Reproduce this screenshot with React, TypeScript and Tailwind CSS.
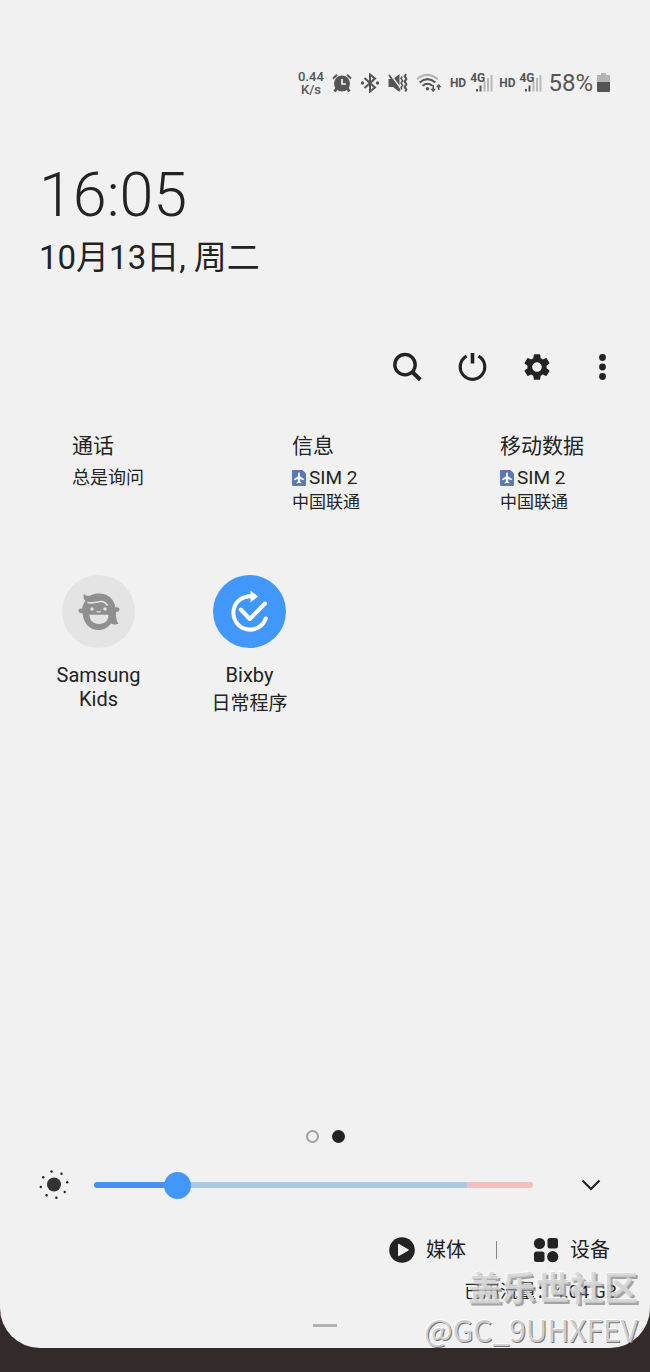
import { useState } from "react";
import { MdSettings } from "react-icons/md";

const sims = [
  { title: "通话", value: "总是询问" },
  { title: "信息", sim: "SIM 2", value: "中国联通" },
  { title: "移动数据", sim: "SIM 2", value: "中国联通" },
];

function AlarmIcon() {
  return (
    <svg viewBox="0 0 20 20" className="size-5" fill="none" stroke="currentColor" aria-hidden="true">
      <circle cx="10" cy="10.500" r="8" fill="currentColor" stroke="none" />
      <path d="M1 5.400 5 1.800M19 5.400 15 1.800" strokeWidth="2" />
      <path d="M4.500 15.500 2.600 18.500M15.500 15.500l1.900 3" strokeWidth="2.800" />
      <path d="M10 6v5h4" stroke="#f1f1f1" strokeWidth="1.700" />
    </svg>
  );
}

function BluetoothIcon() {
  return (
    <svg viewBox="0 0 20 20" className="size-5" fill="none" stroke="currentColor" strokeWidth="2" aria-hidden="true">
      <path d="M4.500 5 15 14.500 10 18.500V1.500L15 5.500 4.500 15" />
      <circle cx="2.500" cy="10" r="1.700" fill="currentColor" stroke="none" />
      <circle cx="17.500" cy="10" r="1.700" fill="currentColor" stroke="none" />
    </svg>
  );
}

function MuteVibrateIcon() {
  return (
    <svg viewBox="0 0 20 20" className="size-5" fill="none" stroke="currentColor" aria-hidden="true">
      <path d="M.5 6h4.500L11.500 1v18L5 14H.5z" fill="currentColor" stroke="none" />
      <path d="M2.200 1 13 16" stroke="#f1f1f1" strokeWidth="1.400" />
      <path d="M1 2 12 17.500" strokeWidth="1.800" />
      <path d="M14.200 3.500l-1.200 2 1.600 2.200L13 10l1.600 2.200-1.600 2.300 1 1.800" strokeWidth="1.500" />
      <path d="M18 1l-1.400 2.300L18.400 6l-1.800 2.600 1.800 2.700-1.800 2.600 1.800 2.700-1.200 2" strokeWidth="2" />
    </svg>
  );
}

function WifiIcon() {
  return (
    <svg viewBox="0 0 26 20" className="h-5 w-[26px]" fill="none" stroke="currentColor" strokeWidth="2" aria-hidden="true">
      <path d="M1 6.200Q11-2.400 22 6.200" stroke="#b5b5b5" />
      <path d="M3.600 9.400Q11.500 2.800 19.400 9.400" />
      <path d="M6.600 12.800Q11.500 8.600 16.400 12.800" />
      <circle cx="11.500" cy="15.800" r="1.800" fill="currentColor" stroke="none" />
      <path d="M17.200 12v5M22.700 17v-4" strokeWidth="1.600" />
      <path d="M14.500 15.800h5.400l-2.700 3.400zM20 14.200h5.400l-2.700-3.400z" fill="currentColor" stroke="none" />
    </svg>
  );
}

function Signal() {
  return (
    <span className="flex items-center gap-[5px]">
      <span className="text-xs leading-none font-bold">HD</span>
      <span className="relative block h-5 w-[22px]">
        <svg viewBox="0 0 22 20" className="h-5 w-[22px]" aria-hidden="true">
          <path d="M5 16h2v2.500H5zM8.500 12.500h2v6h-2z" fill="#555" />
          <path d="M12.500 8h2v10.500h-2zM16 5h2v13.500h-2zM19.500 2h2v16.500h-2z" fill="#b9b9b9" />
        </svg>
        <span className="absolute -top-px -left-px text-xs leading-none font-bold">4G</span>
      </span>
    </span>
  );
}

function StatusBar() {
  return (
    <div className="flex h-[30px] items-center justify-end gap-2 pr-10 text-[#555]">
      <div className="flex flex-col items-center text-[13px] leading-[13px] font-medium">
        <span>0.44</span>
        <span>K/s</span>
      </div>
      <AlarmIcon />
      <BluetoothIcon />
      <MuteVibrateIcon />
      <WifiIcon />
      <div className="flex items-center gap-[6px]">
        <Signal />
        <Signal />
        <span className="flex items-center gap-1">
          <span className="text-2xl leading-none">58%</span>
          <svg viewBox="0 0 13 20" className="h-5 w-[13px]" aria-hidden="true">
            <path d="M4 0h5v2h4v8H0V2h4z" fill="#b5b5b5" />
            <path d="M0 9h13v9a1 1 0 0 1-1 1H1a1 1 0 0 1-1-1z" fill="#555" />
          </svg>
        </span>
      </div>
    </div>
  );
}

function Toolbar() {
  return (
    <div className="flex justify-end gap-[33px] pr-8">
      <button type="button" aria-label="搜索" className="size-8">
        <svg viewBox="0 0 32 32" className="size-8" fill="none" stroke="currentColor" strokeWidth="3.400">
          <circle cx="14" cy="13.700" r="10.200" />
          <path d="m21.300 21 8 7.800" strokeWidth="4" />
        </svg>
      </button>
      <button type="button" aria-label="电源" className="size-8">
        <svg viewBox="0 0 32 32" className="size-8" fill="none" stroke="currentColor" strokeWidth="3.200">
          <path d="M10.600 5.200a12.300 12.300 0 1 0 11.800 0" />
          <path d="M16.500 2v10.500" strokeWidth="3.600" />
        </svg>
      </button>
      <button type="button" aria-label="设置" className="size-8">
        <MdSettings className="size-8" />
      </button>
      <button type="button" aria-label="更多" className="size-8">
        <svg viewBox="0 0 32 32" className="size-8" fill="currentColor">
          <circle cx="16.500" cy="6.500" r="3.400" />
          <circle cx="16.500" cy="16" r="3.400" />
          <circle cx="16.500" cy="25.500" r="3.400" />
        </svg>
      </button>
    </div>
  );
}

function SimIcon() {
  return (
    <svg viewBox="0 0 14 16" className="h-4 w-[14px]" aria-hidden="true">
      <path d="M1 0h9.500L14 3.500V15a1 1 0 0 1-1 1H1a1 1 0 0 1-1-1V1a1 1 0 0 1 1-1z" fill="#5b78b4" />
      <path d="M7 2.600c.6 0 .9.6.9 1.300v2.400l4 2.600v1.300l-4-1.200v2.300l1.400 1.100v1L7 12.800l-2.300.6v-1l1.400-1.100V9l-4 1.200V8.900l4-2.600V3.900c0-.7.3-1.300.9-1.300z" fill="#fff" />
    </svg>
  );
}

function KidsIcon() {
  return (
    <svg viewBox="0 0 42 38" className="h-[38px] w-[42px]" aria-hidden="true">
      <path
        d="M6 1c1.500 1.800 3.500 2 6 1.700C15 1 18 .6 21.500.6 30 .6 36 6 37.500 14.500c2-.6 4 .3 4 2s-1.700 2.600-3.500 2.300c-.2 5 .2 9 2.500 12-3 1-5.500.8-7.500-.3C29.800 34.500 26 37 20.800 37 12 37 5.500 31 4.600 20.500 2.500 20.600.5 19.500.5 17.700s1.700-2.600 3.700-2c.4-3 1.500-5.500 3.200-7.700C5.500 6 5 3.500 6 1z"
        fill="#8f8f8f"
      />
      <path d="M10 9.500c5 1.500 10-1.800 15-.8 2.200.4 3.200 1.600 4.200 3.300" fill="none" stroke="#e4e4e4" strokeWidth="1.600" strokeLinecap="round" />
      <circle cx="14" cy="16" r="1.700" fill="#e4e4e4" />
      <circle cx="27" cy="16" r="1.700" fill="#e4e4e4" />
      <path d="M19 18.500q1.700 1 3.400 0" fill="none" stroke="#e4e4e4" strokeWidth="1.200" strokeLinecap="round" />
      <path d="M11.500 21.800h19C30.500 27.500 27 31 21 31s-9.500-3.500-9.500-9.200z" fill="#e4e4e4" />
    </svg>
  );
}

function RoutineIcon() {
  return (
    <svg viewBox="0 0 42 46" className="h-[46px] w-[42px]" fill="none" stroke="#fff" strokeWidth="4" strokeLinecap="round" aria-hidden="true">
      <path d="M23 7.300A16.700 16.700 0 1 0 36.800 29.500" />
      <path d="M21.500 1.500 29 7.500 21.500 13.500z" fill="#fff" stroke="none" />
      <path d="M11.800 20.500 20.800 30 36 14.500" strokeLinejoin="round" />
    </svg>
  );
}

function BrightnessIcon() {
  return (
    <svg viewBox="0 0 30 30" className="size-[30px] shrink-0" fill="#222" aria-hidden="true">
      <circle cx="15" cy="14.500" r="7" fill="#333" />
      <circle cx="12.500" cy="1.500" r="1.200" />
      <circle cx="22.500" cy="3.800" r="1.200" />
      <circle cx="28.200" cy="12.200" r="1.200" />
      <circle cx="25.700" cy="22" r="1.200" />
      <circle cx="17.400" cy="27.700" r="1.200" />
      <circle cx="7.600" cy="25.300" r="1.200" />
      <circle cx="1.800" cy="17" r="1.200" />
      <circle cx="4.200" cy="7.200" r="1.200" />
    </svg>
  );
}

function BrightnessBar() {
  const [level, setLevel] = useState(17);

  return (
    <div className="flex items-center pr-[46px] pl-[39px]">
      <BrightnessIcon />
      <input
        type="range"
        aria-label="亮度"
        min={0}
        max={100}
        value={level}
        onChange={(e) => setLevel(Number(e.target.value))}
        className="mr-[45px] ml-[25px] h-[6px] min-w-0 flex-1 appearance-none rounded-full [&::-webkit-slider-thumb]:size-[27px] [&::-webkit-slider-thumb]:appearance-none [&::-webkit-slider-thumb]:rounded-full [&::-webkit-slider-thumb]:bg-[#4297fd]"
        style={{
          background: `linear-gradient(to right, #4b8fee ${level}%, #a8cce8 ${level}%, #a8cce8 85%, #f3bfc1 85%)`,
        }}
      />
      <button type="button" aria-label="展开" className="flex size-[26px] items-center justify-center">
        <svg viewBox="0 0 20 12" className="h-3 w-5" fill="none" stroke="currentColor" strokeWidth="2.200">
          <path d="m1.500 1.500 8.500 8.500 8.500-8.500" />
        </svg>
      </button>
    </div>
  );
}

function MediaBar() {
  return (
    <div className="flex h-8 items-center justify-end pr-10 text-xl">
      <button type="button" className="flex items-center gap-[11px]">
        <svg viewBox="0 0 26 26" className="size-[26px]" aria-hidden="true">
          <circle cx="13" cy="13" r="12.800" fill="currentColor" />
          <path d="M9.500 7.200v11.600L19.500 13z" fill="#f1f1f1" stroke="#f1f1f1" strokeLinejoin="round" />
        </svg>
        媒体
      </button>
      <span className="mr-9 ml-[30px] h-[18px] w-px bg-[#8a8a8a]" />
      <button type="button" className="flex items-center gap-[11px]">
        <svg viewBox="0 0 26 26" className="size-[26px]" fill="currentColor" aria-hidden="true">
          <circle cx="6.500" cy="6.500" r="5.600" />
          <rect x="14.500" y="1" width="10.500" height="10.500" rx="2.500" />
          <rect x="1" y="14.500" width="10.500" height="10.500" rx="2.500" />
          <circle cx="19.700" cy="19.700" r="5.600" />
        </svg>
        设备
      </button>
    </div>
  );
}

export default function App() {
  return (
    <div className="flex min-h-screen flex-col bg-[#332a2a] pb-6 font-[Roboto,'Noto_Sans_CJK_SC',sans-serif] text-[#232323]">
      <main className="relative flex flex-1 flex-col rounded-b-[40px] bg-[#f1f1f1] pt-[68px]">
        <StatusBar />

        <header className="mt-[61px] pl-[39px]">
          <h1 className="text-[61px] leading-[72px] font-light">16:05</h1>
          <p className="mt-[3px] text-[33px] leading-[48px]">10月13日, 周二</p>
        </header>

        <div className="mt-[69px]">
          <Toolbar />
        </div>

        <section className="mt-[47px] grid grid-cols-[220fr_208fr_84fr] pr-[66px] pl-[72px]">
          {sims.map((s) => (
            <div key={s.title}>
              <h2 className="text-[21px] leading-8 whitespace-nowrap">{s.title}</h2>
              {s.sim ? (
                <div className="mt-1">
                  <p className="flex items-center gap-[3px] text-[19px] leading-6">
                    <SimIcon />
                    {s.sim}
                  </p>
                  <p className="text-[17px] leading-6">{s.value}</p>
                </div>
              ) : (
                <p className="mt-1 text-lg leading-6">{s.value}</p>
              )}
            </div>
          ))}
        </section>

        <section className="mt-[61px] grid grid-cols-4 px-[23px]">
          <button type="button" className="flex flex-col items-center">
            <span className="flex size-[73px] items-center justify-center rounded-full bg-[#e4e4e4]">
              <KidsIcon />
            </span>
            <span className="mt-[15px] text-xl leading-6">Samsung</span>
            <span className="text-xl leading-6">Kids</span>
          </button>
          <button type="button" className="flex flex-col items-center">
            <span className="flex size-[73px] items-center justify-center rounded-full bg-[#4297fd]">
              <RoutineIcon />
            </span>
            <span className="mt-[15px] text-xl leading-6">Bixby</span>
            <span className="mt-[5px] text-[19px] leading-6">日常程序</span>
          </button>
        </section>

        <footer className="mt-auto pt-16">
          <div className="flex justify-center gap-[13px]">
            <span className="size-[13px] rounded-full border-2 border-[#a0a0a0]" />
            <span className="size-[13px] rounded-full bg-[#222]" />
          </div>
          <div className="mt-[27px]">
            <BrightnessBar />
          </div>
          <div className="mt-[34px]">
            <MediaBar />
          </div>
          <p className="mt-4 pr-[33px] text-right text-lg leading-5">已用流量：4.04 GB</p>
          <div className="mx-auto mt-[22px] mb-[21px] h-[3px] w-6 bg-[#b3b3b3]" />
        </footer>

        <div className="pointer-events-none absolute right-3 -bottom-px text-right font-['Noto_Sans_CJK_SC',sans-serif] whitespace-nowrap">
          <p className="text-[34px] leading-[44px] font-bold text-[#d2d2d2]/80 [text-shadow:-1px_-1px_0_#ffffff99,2px_2px_0_#808080b3]">
            盖乐世社区
          </p>
          <p className="text-[30px] leading-10 text-[#cdcdcd] [text-shadow:-1px_-1px_0_#fff,1px_1px_0_#777]">
            @GC_9UHXFEV
          </p>
        </div>
      </main>
    </div>
  );
}
